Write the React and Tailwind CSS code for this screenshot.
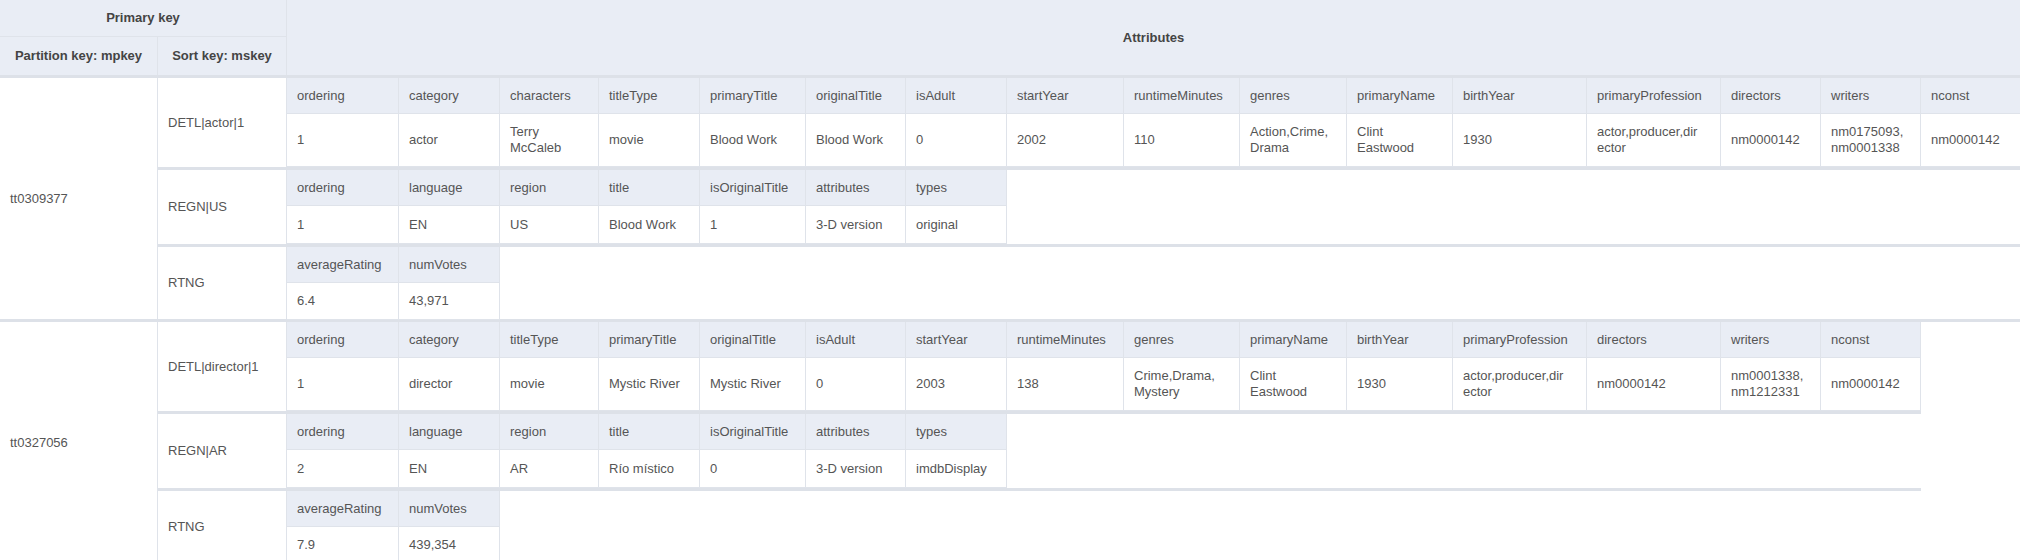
const B = "border-[#dfe3ea]";

function Inner({ cols, widths, vals, dataH }) {
  return (
    <div className="flex flex-col">
      <div className="flex">
        {cols.map((c, i) => (
          <div key={i} style={{ width: widths[i] }} className={`h-[36px] flex items-center px-[10px] bg-[#e9edf5] border-r border-b ${B} shrink-0`}>{c}</div>
        ))}
      </div>
      <div className="flex">
        {vals.map((c, i) => (
          <div key={i} style={{ width: widths[i], height: dataH }} className={`flex items-center px-[10px] bg-white border-r border-b ${B} shrink-0 leading-[16px]`}><span>{c}</span></div>
        ))}
      </div>
    </div>
  );
}

function Sub({ sk, first, h, children }) {
  return (
    <div className={`flex ${first ? "" : "border-t-[3px] border-[#dde1e8]"}`} style={{ height: h }}>
      <div className={`w-[129px] shrink-0 flex items-center px-[10px] border-r ${B}`}>{sk}</div>
      <div>{children}</div>
    </div>
  );
}

const w1 = [112, 101, 99, 101, 106, 100, 101, 117, 116, 107, 106, 134, 134, 100, 100, 100];
const w2 = [112, 101, 99, 101, 106, 100, 101, 117, 116, 107, 106, 134, 134, 100, 100];
const wr = [112, 101, 99, 101, 106, 100, 101];
const wt = [112, 101];

const detl1 = ["ordering","category","characters","titleType","primaryTitle","originalTitle","isAdult","startYear","runtimeMinutes","genres","primaryName","birthYear","primaryProfession","directors","writers","nconst"];
const detl1v = ["1","actor","Terry McCaleb","movie","Blood Work","Blood Work","0","2002","110","Action,Crime, Drama","Clint Eastwood","1930","actor,producer,dir ector","nm0000142","nm0175093, nm0001338","nm0000142"];
const detl2 = ["ordering","category","titleType","primaryTitle","originalTitle","isAdult","startYear","runtimeMinutes","genres","primaryName","birthYear","primaryProfession","directors","writers","nconst"];
const detl2v = ["1","director","movie","Mystic River","Mystic River","0","2003","138","Crime,Drama, Mystery","Clint Eastwood","1930","actor,producer,dir ector","nm0000142","nm0001338, nm1212331","nm0000142"];
const regn = ["ordering","language","region","title","isOriginalTitle","attributes","types"];

const w2b = [112, 101, 99, 101, 106, 100, 101, 117, 116, 107, 106, 134, 134, 100, 100];

function Group({ pk, d, dv, dw, rv, tv }) {
  return (
    <div className="flex border-t-[3px] border-[#dde1e8]">
      <div className={`w-[158px] shrink-0 flex items-center px-[10px] border-r ${B}`}>{pk}</div>
      <div className="flex flex-col">
        <Sub sk={d === detl1 ? "DETL|actor|1" : "DETL|director|1"} first h={89}>
          <Inner cols={d} widths={dw} vals={dv} dataH={53} />
        </Sub>
        <Sub sk={rv[0]} h={77}>
          <Inner cols={regn} widths={wr} vals={rv[1]} dataH={38} />
        </Sub>
        <Sub sk="RTNG" h={75}>
          <Inner cols={["averageRating","numVotes"]} widths={wt} vals={tv} dataH={37} />
        </Sub>
      </div>
    </div>
  );
}

export default function App() {
  return (
    <div className="w-[2020px] h-[560px] overflow-hidden bg-white text-[13px] text-[#555]" style={{ fontFamily: '"Liberation Sans", Arial, sans-serif' }}>
      <div className="flex">
        <div className="flex flex-col">
          <div className={`h-[37px] w-[287px] flex items-center justify-center font-bold bg-[#e9edf5] border-r border-b ${B} text-[#444]`}>Primary key</div>
          <div className="flex h-[38px]">
            <div className={`w-[158px] flex items-center justify-center font-bold bg-[#e9edf5] border-r ${B} text-[#444]`}>Partition key: mpkey</div>
            <div className={`w-[129px] flex items-center justify-center font-bold bg-[#e9edf5] border-r ${B} text-[#444]`}>Sort key: mskey</div>
          </div>
        </div>
        <div className="flex-1 flex items-center justify-center font-bold bg-[#e9edf5] text-[#444]">Attributes</div>
      </div>
      <Group pk="tt0309377" d={detl1} dv={detl1v} dw={w1} rv={["REGN|US", ["1","EN","US","Blood Work","1","3-D version","original"]]} tv={["6.4","43,971"]} />
      <Group pk="tt0327056" d={detl2} dv={detl2v} dw={w2b} rv={["REGN|AR", ["2","EN","AR","Río místico","0","3-D version","imdbDisplay"]]} tv={["7.9","439,354"]} />
    </div>
  );
}
